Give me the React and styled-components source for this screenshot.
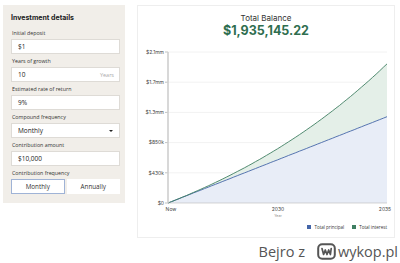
import styled, { createGlobalStyle } from "styled-components";

const GlobalStyle = createGlobalStyle`
  html, body { margin:0; padding:0; background:#fff; }
  body { font-family: "Open Sans", "Noto Sans", sans-serif; color:#333; }
`;

const colors = {
  panel: "#f1eee9",
  border: "#dedbd6",
  green: "#2f6e4f",
  blue: "#4465a8",
  greenLine: "#3f7f62",
  blueFill: "#e8edf7",
  greenFill: "#e4efe8",
};

const fields = [
  { label: "Initial deposit", value: "$1" },
  { label: "Years of growth", value: "10", suffix: "Years" },
  { label: "Estimated rate of return", value: "9%" },
  { label: "Compound frequency", value: "Monthly", select: true },
  { label: "Contribution amount", value: "$10,000" },
];

const yTicks = ["$2.1mm", "$1.7mm", "$1.3mm", "$850k", "$430k", "$0"];
const xTicks = [
  { label: "Now", x: 34 },
  { label: "2030", x: 141 },
  { label: "2035", x: 248 },
];

// chart geometry
const X0 = 31, X1 = 250, YT = 8, YB = 159, MAX = 2.1e6;
const px = (m) => X0 + ((X1 - X0) * m) / 120;
const py = (v) => YB - ((YB - YT) * v) / MAX;
const r = 0.09 / 12;
const total = (m) => Math.pow(1 + r, m) + (10000 * (Math.pow(1 + r, m) - 1)) / r;
const principal = (m) => 1 + 10000 * m;

const months = Array.from({ length: 61 }, (_, i) => i * 2);
const totalPts = months.map((m) => `${px(m).toFixed(1)},${py(total(m)).toFixed(1)}`);
const princPts = months.map((m) => `${px(m).toFixed(1)},${py(principal(m)).toFixed(1)}`);

function Chart() {
  return (
    <ChartSvg width="258" height="180" viewBox="0 0 258 180">
      {yTicks.map((t, i) => {
        const y = YT + ((YB - YT) * i) / 5;
        return (
          <g key={t}>
            {i < 5 && <line x1={X0} x2={X1} y1={y} y2={y} stroke="#f2f2f2" strokeWidth="1" />}
            <line x1={X0 - 3} x2={X0} y1={y} y2={y} stroke="#999" strokeWidth="0.6" />
            <text x={X0 - 4} y={y + 1.8} textAnchor="end" fontSize="5" fill="#444">{t}</text>
          </g>
        );
      })}
      <polygon points={`${princPts.join(" ")} ${X1},${YB} ${X0},${YB}`} fill={colors.blueFill} />
      <polygon points={`${totalPts.join(" ")} ${[...princPts].reverse().join(" ")}`} fill={colors.greenFill} />
      <polyline points={princPts.join(" ")} fill="none" stroke={colors.blue} strokeWidth="0.9" />
      <polyline points={totalPts.join(" ")} fill="none" stroke={colors.greenLine} strokeWidth="0.9" />
      <line x1={X0} x2={X0} y1={YT} y2={YB} stroke="#cfcfcf" strokeWidth="1.6" />
      <line x1={X0} x2={X1} y1={YB} y2={YB} stroke="#bbb" strokeWidth="0.6" />
      {xTicks.map((t) => (
        <text key={t.label} x={t.x} y={YB + 7.5} textAnchor="middle" fontSize="5" fill="#444">{t.label}</text>
      ))}
      <text x="141" y={YB + 14} textAnchor="middle" fontSize="3.5" fill="#888">Year</text>
    </ChartSvg>
  );
}

function WykopLogo() {
  return (
    <svg width="19" height="17" viewBox="0 0 19 17">
      <rect x="1.2" y="1.2" width="16.6" height="14.6" rx="4" fill="none" stroke="#555" strokeWidth="2" />
      <path d="M5 5.5 L6.6 11.5 L8.3 7 L10 11.5 L11.7 7 L13.4 11.5 L14.2 5.5" fill="none" stroke="#555" strokeWidth="1.7" strokeLinejoin="round" strokeLinecap="round" />
    </svg>
  );
}

export default function App() {
  return (
    <Page>
      <GlobalStyle />
      <Main>
        <Panel>
          <PanelTitle>Investment details</PanelTitle>
          {fields.map((f) => (
            <Field key={f.label}>
              <Label>{f.label}</Label>
              <InputBox>
                <Value>{f.value}</Value>
                {f.suffix && <Suffix>{f.suffix}</Suffix>}
                {f.select && <Caret />}
              </InputBox>
            </Field>
          ))}
          <Field>
            <Label>Contribution frequency</Label>
            <Toggle>
              <ToggleBtn $active>Monthly</ToggleBtn>
              <ToggleBtn>Annually</ToggleBtn>
            </Toggle>
          </Field>
        </Panel>
        <Card>
          <CardTitle>Total Balance</CardTitle>
          <Balance>$1,935,145.22</Balance>
          <Chart />
          <Legend>
            <LegendItem><Swatch $color={colors.blue} />Total principal</LegendItem>
            <LegendItem><Swatch $color={colors.greenLine} />Total interest</LegendItem>
          </Legend>
        </Card>
      </Main>
      <Watermark>
        <Author>Bejro z</Author>
        <WykopLogo />
        <span>wykop.pl</span>
      </Watermark>
    </Page>
  );
}

const Page = styled.div`
  display:flex;
  flex-direction:column;
  width:400px;
  height:263px;
  padding:5px 2px 0 3px;
  box-sizing:border-box;
  overflow:hidden;
`;
const Main = styled.div`
  display:flex;
  align-items:flex-start;
  gap:12px;
`;
const Panel = styled.div`
  display:flex;
  flex-direction:column;
  gap:4px;
  width:122px;
  height:198px;
  padding:8px 5px 0 8px;
  box-sizing:border-box;
  background:${colors.panel};
`;
const PanelTitle = styled.div`
  font-family:"Inter", sans-serif;
  font-size:7px;
  line-height:9px;
  font-weight:700;
  color:#222;
  margin-bottom:4px;
`;
const Field = styled.div`
  display:flex;
  flex-direction:column;
  gap:2px;
`;
const Label = styled.div`
  font-size:5.3px;
  line-height:7px;
  color:#333;
  padding-left:1px;
`;
const InputBox = styled.div`
  display:flex;
  align-items:center;
  height:15px;
  padding:0 5px 0 6px;
  box-sizing:border-box;
  background:#fff;
  border:1px solid ${colors.border};
`;
const Value = styled.span`
  flex:1;
  font-size:6.5px;
  color:#222;
`;
const Suffix = styled.span`
  font-size:5.5px;
  color:#aaa;
`;
const Caret = styled.span`
  width:0;
  height:0;
  border-left:2px solid transparent;
  border-right:2px solid transparent;
  border-top:2.5px solid #222;
  margin-right:1px;
`;
const Toggle = styled.div`
  display:flex;
  gap:2px;
`;
const ToggleBtn = styled.div`
  flex:1;
  display:flex;
  align-items:center;
  justify-content:center;
  height:15px;
  box-sizing:border-box;
  background:#fff;
  border:1px solid ${(p) => (p.$active ? "#9fb3d6" : "#fff")};
  font-size:6.3px;
  color:#333;
`;
const Card = styled.div`
  display:flex;
  flex-direction:column;
  align-items:center;
  width:258px;
  height:233px;
  padding-top:7px;
  box-sizing:border-box;
  border:1px solid #eeeeee;
  background:#fff;
`;
const CardTitle = styled.div`
  font-family:"Inter", sans-serif;
  font-size:8px;
  line-height:10px;
  color:#333;
`;
const Balance = styled.div`
  font-family:"Inter", sans-serif;
  font-size:12.5px;
  line-height:15px;
  font-weight:700;
  color:${colors.green};
  margin-bottom:6px;
`;
const ChartSvg = styled.svg`
  display:block;
  font-family:"Inter", sans-serif;
`;
const Legend = styled.div`
  display:flex;
  align-self:stretch;
  justify-content:flex-end;
  gap:8px;
  padding-right:7px;
`;
const LegendItem = styled.div`
  display:flex;
  align-items:center;
  gap:3px;
  font-size:4.5px;
  line-height:6px;
  color:#333;
`;
const Swatch = styled.span`
  width:4px;
  height:4px;
  background:${(p) => p.$color};
`;
const Watermark = styled.div`
  display:flex;
  align-items:center;
  justify-content:flex-end;
  gap:2px;
  margin-top:5px;
  font-size:14.5px;
  line-height:17px;
  color:#555;
`;
const Author = styled.span`
  margin-right:10px;
`;
